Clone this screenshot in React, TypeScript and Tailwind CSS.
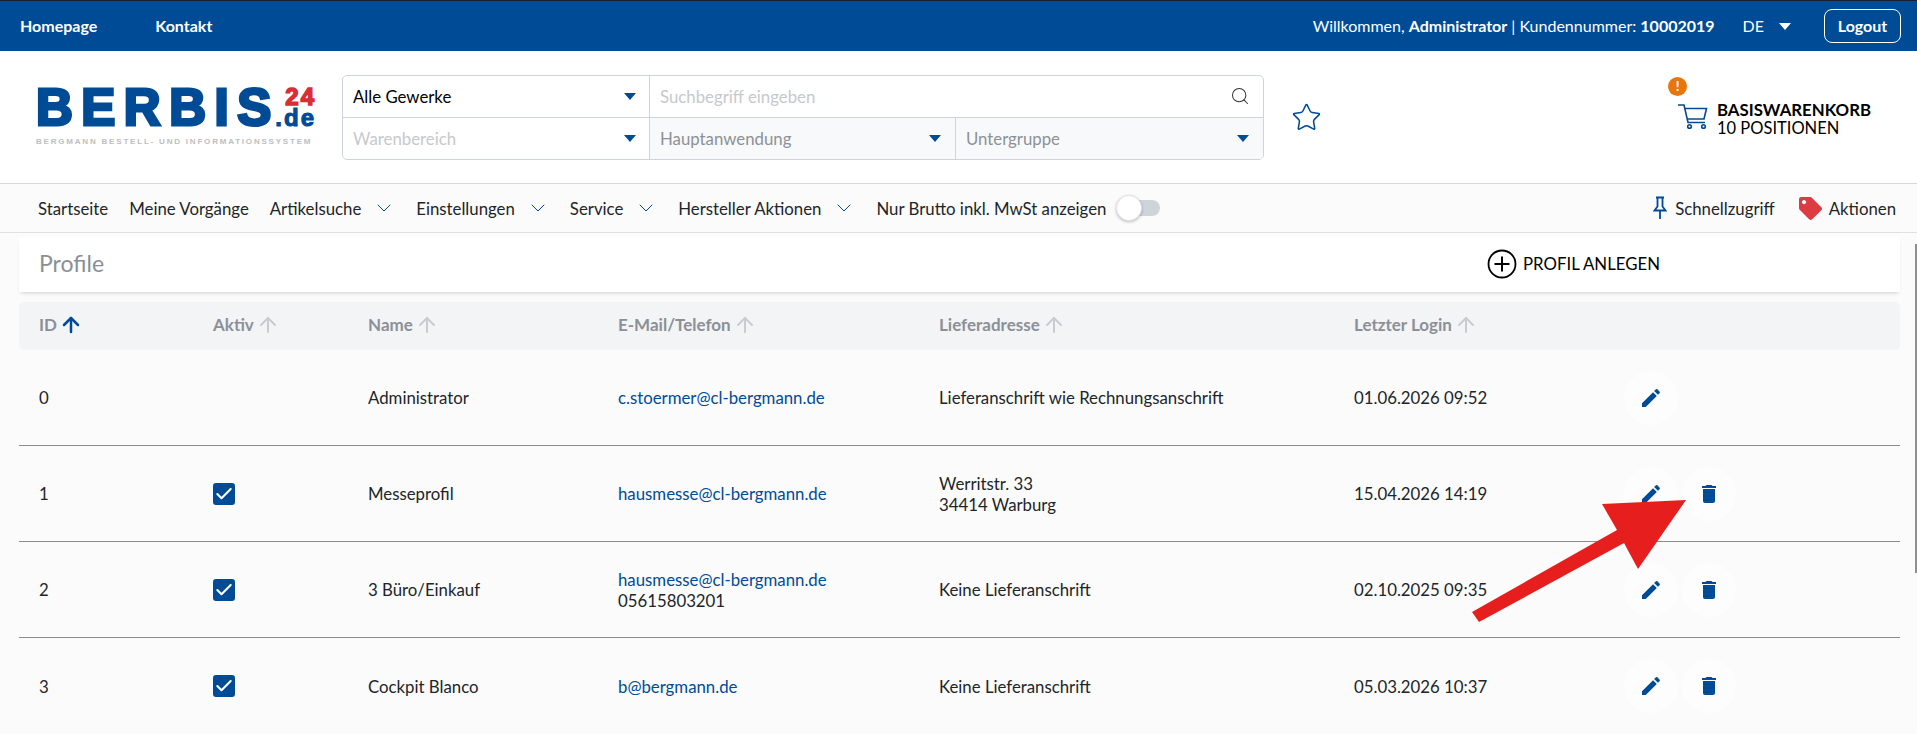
import { ChevronDown, Search, Star, Check, ArrowUp } from 'lucide-react';
import { FaTag } from 'react-icons/fa';
import { MdEdit, MdDelete } from 'react-icons/md';

const rows = [
  { id: '0', active: false, name: 'Administrator', mail: 'c.stoermer@cl-bergmann.de', phone: '', addr: ['Lieferanschrift wie Rechnungsanschrift'], login: '01.06.2026 09:52', del: false },
  { id: '1', active: true, name: 'Messeprofil', mail: 'hausmesse@cl-bergmann.de', phone: '', addr: ['Werritstr. 33', '34414 Warburg'], login: '15.04.2026 14:19', del: true },
  { id: '2', active: true, name: '3 Büro/Einkauf', mail: 'hausmesse@cl-bergmann.de', phone: '05615803201', addr: ['Keine Lieferanschrift'], login: '02.10.2025 09:35', del: true },
  { id: '3', active: true, name: 'Cockpit Blanco', mail: 'b@bergmann.de', phone: '', addr: ['Keine Lieferanschrift'], login: '05.03.2026 10:37', del: true },
];

const columns = ['Aktiv', 'Name', 'E-Mail/Telefon', 'Lieferadresse', 'Letzter Login'];

function Caret({ white }: { white?: boolean }) {
  return (
    <span
      className={`block w-0 h-0 border-x-[6px] border-x-transparent border-t-[7px] ${white ? 'border-t-white' : 'border-t-[#004b96]'}`}
    />
  );
}

function NavItem({ label, menu }: { label: string; menu?: boolean }) {
  return (
    <div className="flex items-center">
      <span>{label}</span>
      {menu && <ChevronDown className="w-[24px] h-[24px] ml-[11px] mr-[-1px] text-[#004b96]" strokeWidth={1} />}
    </div>
  );
}

function Logo() {
  return (
    <div className="w-[280px] shrink-0 ml-[36px] mt-[-1px] [font-family:'Liberation_Sans',sans-serif]">
      <div className="flex items-start justify-between h-[41px]">
        <span className="text-[51px] leading-[41px] font-bold text-[#004b96] tracking-[8.5px] [-webkit-text-stroke:3px_#004b96]">
          BERBIS
        </span>
        <div className="flex flex-col items-end font-bold shrink-0 ml-[-8px]">
          <span className="text-[24px] leading-[20px] text-[#d62f34] tracking-[2px] [-webkit-text-stroke:1.5px_#d62f34]">24</span>
          <span className="text-[24px] leading-[21px] text-[#004b96] tracking-[2px] [-webkit-text-stroke:1px_#004b96]">.de</span>
        </div>
      </div>
      <div className="mt-[9px] text-[8px] leading-[9px] font-bold text-[#bcbec0] tracking-[1.8px] whitespace-nowrap">
        BERGMANN BESTELL- UND INFORMATIONSSYSTEM
      </div>
    </div>
  );
}

function SearchBox() {
  return (
    <div className="w-[922px] h-[85px] ml-[26px] border border-[#ced4da] rounded-[5px] flex flex-col overflow-hidden">
      <div className="h-[42px] flex border-b border-[#ced4da]">
        <div className="w-[306px] flex items-center justify-between pl-[10px] pr-[13px] text-black">
          <span>Alle Gewerke</span>
          <Caret />
        </div>
        <div className="flex-1 flex items-center justify-between border-l border-[#ced4da] pl-[10px] pr-[13px] text-[#c6c9cc]">
          <span>Suchbegriff eingeben</span>
          <Search className="w-[20px] h-[20px] text-[#333]" strokeWidth={1.25} />
        </div>
      </div>
      <div className="flex-1 flex">
        <div className="w-[306px] flex items-center justify-between pl-[10px] pr-[13px] text-[#c6c9cc]">
          <span>Warenbereich</span>
          <Caret />
        </div>
        <div className="w-[306px] flex items-center justify-between border-l border-[#ced4da] bg-[#f8f9fa] pl-[10px] pr-[14px] text-[#8d9196]">
          <span>Hauptanwendung</span>
          <Caret />
        </div>
        <div className="flex-1 flex items-center justify-between border-l border-[#ced4da] bg-[#f8f9fa] pl-[10px] pr-[14px] text-[#8d9196]">
          <span>Untergruppe</span>
          <Caret />
        </div>
      </div>
    </div>
  );
}

export default function App() {
  return (
    <div className="relative h-[734px] overflow-hidden bg-[#fbfbfb] text-[16.8px] leading-[21px] text-[#212529] [font-family:Lato,sans-serif]">
      <div className="h-[51px] bg-[#004b96] border-t border-[#15212e] flex items-center justify-between pl-[20px] pr-[16px] text-white text-[16px]">
        <div className="flex gap-[58px] font-bold mb-[2px]">
          <span>Homepage</span>
          <span>Kontakt</span>
        </div>
        <div className="flex items-center">
          <span className="mb-[2px]">
            Willkommen, <b>Administrator</b> | Kundennummer: <b>10002019</b>
          </span>
          <span className="ml-[28px] mb-[2px]">DE</span>
          <span className="ml-[15px]"><Caret white /></span>
          <span className="ml-[33px] w-[77px] h-[34px] border border-white rounded-[8px] flex items-center justify-center font-bold pb-[2px]">
            Logout
          </span>
        </div>
      </div>

      <div className="h-[133px] bg-white border-b border-[#d8d8d8] flex items-center">
        <Logo />
        <SearchBox />
        <Star className="w-[31px] h-[31px] ml-[27px] text-[#004b96]" strokeWidth={1.2} />
        <div className="ml-[356px] flex items-center relative">
          <span className="absolute left-[-10px] top-[-20px] w-[19px] h-[19px] rounded-full bg-[#e8760f] text-white text-[13px] font-black flex items-center justify-center">!</span>
          <svg width="30" height="26" viewBox="0 0 30 26" className="text-[#004b96]" fill="none" stroke="currentColor" strokeWidth="1.6">
            <path d="M0 1h6l4 17.5h17" />
            <path d="M7 4.5h21.5L26 15H9.5" />
            <circle cx="11.5" cy="22.5" r="1.8" />
            <circle cx="25.5" cy="22.5" r="1.8" />
          </svg>
          <div className="ml-[9px] text-black leading-[18px] mt-[4px]">
            <div className="font-bold">BASISWARENKORB</div>
            <div className="text-[16.5px]">10 POSITIONEN</div>
          </div>
        </div>
      </div>

      <div className="h-[49px] bg-[#fbfbfb] border-b border-[#e0e0e0] flex items-center justify-between pl-[38px] pr-[21px]">
        <div className="flex items-center gap-[21px]">
          <NavItem label="Startseite" />
          <NavItem label="Meine Vorgänge" />
          <NavItem label="Artikelsuche" menu />
          <NavItem label="Einstellungen" menu />
          <NavItem label="Service" menu />
          <NavItem label="Hersteller Aktionen" menu />
          <div className="flex items-center">
            <span>Nur Brutto inkl. MwSt anzeigen</span>
            <div className="relative ml-[10px] w-[44px] h-[16px] rounded-full">
              <span className="absolute right-0 top-0 w-[30px] h-[16px] rounded-full bg-[#ced4da]" />
              <span className="absolute left-0 top-[-5px] w-[26px] h-[26px] rounded-full bg-white border border-[#e4e4e4] shadow-[0_1px_3px_rgba(0,0,0,0.25)]" />
            </div>
          </div>
        </div>
        <div className="flex items-center">
          <svg width="14" height="24" viewBox="0 0 14 24" className="text-[#004b96]" fill="none" stroke="currentColor" strokeWidth="1.8">
            <path d="M3 1.5h8M4.5 1.5v9L1.5 14.5h11L9.5 10.5v-9M7 14.5V23" />
          </svg>
          <span className="ml-[8px]">Schnellzugriff</span>
          <FaTag className="ml-[24px] w-[23px] h-[23px] text-[#dc3c41]" />
          <span className="ml-[7px]">Aktionen</span>
        </div>
      </div>

      <div className="pl-[19px] pr-[17px] pt-[4px]">
        <div className="h-[55px] bg-white shadow-[0_3px_4px_-2px_rgba(0,0,0,0.18)] flex items-center pl-[20px] pb-[2px]">
          <span className="text-[23px] text-[#8a8f94]">Profile</span>
          <svg width="30" height="30" viewBox="0 0 30 30" className="ml-[1383px] text-black" fill="none" stroke="currentColor" strokeWidth="1.8">
            <circle cx="15" cy="15" r="13.5" />
            <path d="M15 7.5v15M7.5 15h15" strokeWidth="2" />
          </svg>
          <span className="ml-[6px] text-black">PROFIL ANLEGEN</span>
        </div>

        <div className="mt-[10px] h-[48px] bg-[#f3f4f6] rounded-[5px] grid grid-cols-[174px_155px_250px_321px_415px_1fr] items-center pl-[20px] pb-[3px] font-bold text-[#8c9096] text-[17px]">
          <div className="flex items-center gap-[2px]">
            ID <ArrowUp className="w-[24px] h-[24px] text-[#004b96]" strokeWidth={2.5} />
          </div>
          {columns.map(c => (
            <div key={c} className="flex items-center gap-[2px]">
              {c} <ArrowUp className="w-[24px] h-[24px] text-[#c9cccf]" strokeWidth={2} />
            </div>
          ))}
        </div>

        {rows.map(r => (
          <div key={r.id} className="h-[96px] border-b border-[#8c8c8c] grid grid-cols-[174px_155px_250px_321px_415px_1fr] items-center pl-[20px] last:border-b-0">
            <span>{r.id}</span>
            <div>
              {r.active && (
                <span className="w-[22px] h-[22px] rounded-[3px] bg-[#004b96] flex items-center justify-center">
                  <Check className="w-[20px] h-[20px] text-white" strokeWidth={2.5} />
                </span>
              )}
            </div>
            <span>{r.name}</span>
            <div>
              <div className="text-[#004b96]">{r.mail}</div>
              {r.phone && <div>{r.phone}</div>}
            </div>
            <div>
              {r.addr.map(a => (
                <div key={a}>{a}</div>
              ))}
            </div>
            <div className="flex items-center">
              <span className="w-[269px]">{r.login}</span>
              <span className="ml-[1px] w-[54px] h-[54px] rounded-full bg-[#fdfdfd] flex items-center justify-center">
                <MdEdit className="w-[24px] h-[24px] text-[#004b96]" />
              </span>
              {r.del && (
                <span className="ml-[4px] w-[54px] h-[54px] rounded-full bg-[#fdfdfd] flex items-center justify-center">
                  <MdDelete className="w-[24px] h-[24px] text-[#004b96]" />
                </span>
              )}
            </div>
          </div>
        ))}
      </div>

      <div className="absolute right-0 top-[244px] w-[2px] h-[329px] bg-[#8f8f8f]" />

      <svg className="absolute left-[1460px] top-[490px] pointer-events-none" width="240" height="145" viewBox="1460 490 240 145">
        <polygon fill="#e61e1e" points="1472,612 1617,530 1602,504 1686,500 1638,569 1624,543 1479,622" />
      </svg>
    </div>
  );
}
